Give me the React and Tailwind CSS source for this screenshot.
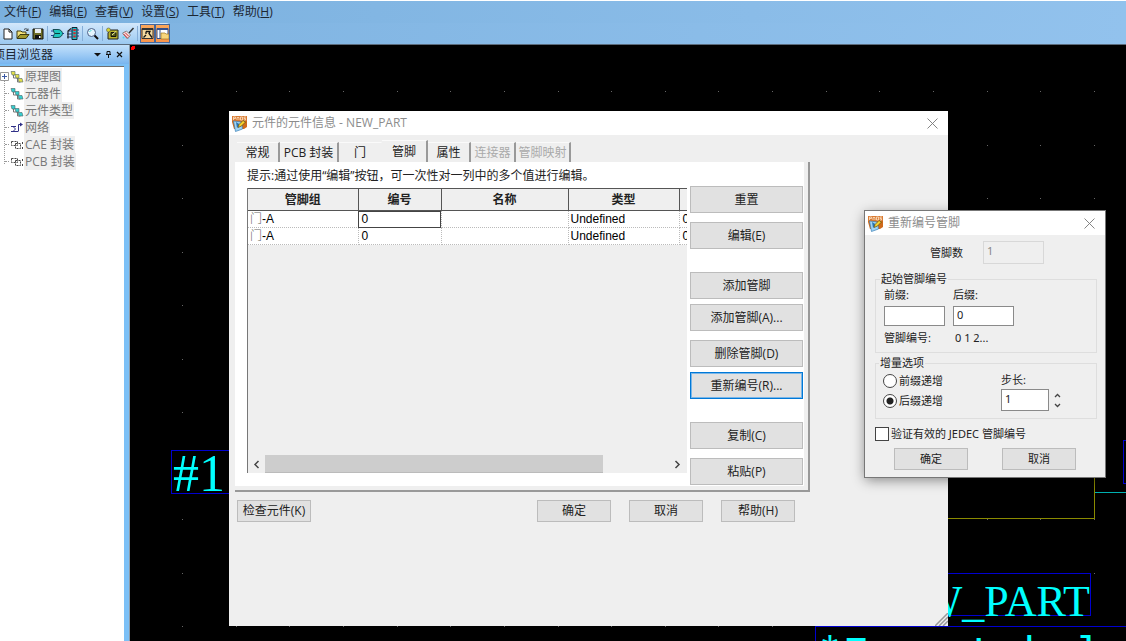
import React, { useState } from 'react';
import clsx from 'clsx';

const menus = [
  ['文件', 'F'],
  ['编辑', 'E'],
  ['查看', 'V'],
  ['设置', 'S'],
  ['工具', 'T'],
  ['帮助', 'H'],
];

const treeItems = [
  { label: '原理图', icon: 'sheet', color: '#e4e04a' },
  { label: '元器件', icon: 'sheet', color: '#35cfd0' },
  { label: '元件类型', icon: 'sheet', color: '#35cfd0' },
  { label: '网络', icon: 'net' },
  { label: 'CAE 封装', icon: 'decal' },
  { label: 'PCB 封装', icon: 'decal' },
];

const tabs = [
  { label: '常规', width: 'w-[43px]' },
  { label: 'PCB 封装', width: 'w-[59px]' },
  { label: '门', width: 'w-[43px]' },
  { label: '管脚', width: 'w-[46px]' },
  { label: '属性', width: 'w-[43px]' },
  { label: '连接器', width: 'w-[45px]', disabled: true },
  { label: '管脚映射', width: 'w-[55px]', disabled: true },
];

const pins = [
  { group: '门', suffix: '-A', number: '0', name: '', type: 'Undefined', swap: '0' },
  { group: '门', suffix: '-A', number: '0', name: '', type: 'Undefined', swap: '0' },
];

const sideButtons = [
  ['重置', '编辑(E)'],
  ['添加管脚', '添加管脚(A)...'],
  ['删除管脚(D)', '重新编号(R)...'],
  ['复制(C)', '粘贴(P)'],
];

function ToolIcon({ children }) {
  return (
    <svg className="h-[15px] w-[15px] shrink-0" viewBox="0 0 15 15" aria-hidden="true">
      {children}
    </svg>
  );
}

function ToolButton({ label, active, children }) {
  return (
    <button
      type="button"
      aria-label={label}
      className={clsx(
        'flex w-[15px] shrink-0 items-center justify-center overflow-hidden',
        active ? 'h-[19px] border border-[#46679b] bg-gradient-to-b from-[#fca75a] to-[#f9944a]' : 'h-[18px]'
      )}
    >
      <ToolIcon>{children}</ToolIcon>
    </button>
  );
}

function ToolSeparator() {
  return <span className="mx-[2px] h-[15px] w-px shrink-0 bg-[#86aed8]" />;
}

function Toolbar() {
  return (
    <div className="flex h-[21px] items-center bg-gradient-to-r from-[#7db2e0] to-[#92c2ed]">
      <div className="flex h-full items-center rounded-r bg-gradient-to-b from-[#d3e8fb] to-[#9bc9f1]">
        <ToolButton label="新建">
          <path d="M4 3h5l3 3v7H4z" fill="#fff" stroke="#222" />
          <path d="M9 3v3h3" fill="none" stroke="#222" />
        </ToolButton>
        <ToolButton label="打开">
          <path d="M2 12V5h4l1 1h4v2" fill="#f4e27a" stroke="#3d3b12" />
          <path d="M2 12.500l3-4h9l-3 4z" fill="#a29a2c" stroke="#3d3b12" />
          <path d="M9 3.500c2-1.500 3-.5 4 1m0-2v2h-2" fill="none" stroke="#222" strokeWidth=".8" />
        </ToolButton>
        <ToolButton label="保存">
          <path d="M3 3h10v10H3z" fill="#6d6d26" stroke="#111" />
          <path d="M5 3h6v4H5z" fill="#e9edf0" />
          <path d="M5 9h6v4H5z" fill="#111" />
          <path d="M9 10h1.500v2H9z" fill="#fff" />
        </ToolButton>
        <ToolSeparator />
        <ToolButton label="逻辑门">
          <path d="M1 5h3M1 9.500h3M11 7.500h3" stroke="#1a3d9a" />
          <path d="M3 3.500h5c3 0 4.500 2.500 4.500 4S11 11.500 8 11.500H3l1.500-4z" fill="#1fc7be" stroke="#174e55" />
          <path d="M5 7.500h5" stroke="#083d3e" />
        </ToolButton>
        <ToolButton label="器件">
          <path d="M7 1.500h5v12H7z" fill="#19bfc8" stroke="#123" />
          <path d="M9.500 3v9" stroke="#d4252b" strokeWidth="2.500" strokeDasharray="2 1.200" />
          <path d="M3 5h4M2 8h5M2 11h5M12 4h2M12 7h2M12 10h2" stroke="#263b78" />
          <path d="M6 2.500L3 5v7.500" fill="none" stroke="#222" strokeWidth="1.200" />
        </ToolButton>
        <ToolSeparator />
        <ToolButton label="缩放">
          <circle cx="6.500" cy="6.500" r="4" fill="#e5f6ff" stroke="#4b5f86" />
          <path d="M4.500 6a2 2 0 0 1 2-1.500" fill="none" stroke="#5dd" />
          <path d="M9.500 9.500L13 13" stroke="#111" strokeWidth="2" />
        </ToolButton>
        <ToolSeparator />
        <ToolButton label="设计">
          <path d="M5 4h8v9H3V7z" fill="#b9b32b" stroke="#222" />
          <path d="M6 6.500h5v4H6z" fill="#555b17" stroke="#111" />
          <path d="M7 9l4-3.500" stroke="#f5f5a0" />
          <circle cx="3.500" cy="4" r="2" fill="#d8d62a" stroke="#555" strokeWidth=".6" />
        </ToolButton>
        <ToolButton label="画笔">
          <path d="M13.500 2L9 7" stroke="#333" strokeWidth="1.500" />
          <path d="M2.500 7l4-2L10.500 9l-3 4z" fill="#f3e4e4" stroke="#666" strokeWidth=".7" />
          <path d="M3.500 8l4 4M5 6.500l4 4" stroke="#d7262a" />
          <circle cx="3.500" cy="11.500" r="1" fill="#51d5ea" />
        </ToolButton>
        <ToolSeparator />
        <ToolButton label="项目浏览器" active>
          <path d="M2 2.500h11v10H2z" fill="#f5d99f" stroke="#333" />
          <path d="M2 3.500h11" stroke="#333" />
          <path d="M3.500 11.500L6 9M6 5.500h4l-1 2 3 4M6 5.500v2.500" fill="none" stroke="#111" strokeWidth="1.300" />
        </ToolButton>
        <ToolButton label="输出窗口" active>
          <path d="M2 2.500h11v10H2z" fill="#fff" stroke="#35508c" />
          <path d="M2 3.500h11M5 4v8" stroke="#35508c" />
          <path d="M6 7h4l1 1h3v5H6z" fill="#f8d57b" stroke="#9e7925" strokeWidth=".7" />
        </ToolButton>
      </div>
    </div>
  );
}

function TreeIcon({ icon, color }) {
  if (icon === 'net') {
    return (
      <svg className="h-[14px] w-[14px]" viewBox="0 0 14 14" aria-hidden="true">
        <path d="M1 5.500h5M8.500 10V3.500H12M1 10.500h7.500M3 5.500l2.500 2.500L3 10.500" fill="none" stroke="#303087" />
        <path d="M10 1.500l3 2-3 2z" fill="#303087" />
      </svg>
    );
  }
  if (icon === 'decal') {
    return (
      <svg className="h-[14px] w-[14px]" viewBox="0 0 14 14" aria-hidden="true">
        <path d="M1.500 3.500h6v4h-6zM5.500 5.500h5v5h-5z" fill="none" stroke="#444" strokeDasharray="2 1" />
        <path d="M12.500 4v2M12.500 9v2" stroke="#444" />
      </svg>
    );
  }
  return (
    <svg className="h-[14px] w-[14px]" viewBox="0 0 14 14" aria-hidden="true">
      <path d="M3.500 5v3h4M7.500 8v4h3" fill="none" stroke="#777" />
      <path d="M1 1.500h4v3.500H2z" fill={color} stroke="#4d6466" strokeWidth=".6" />
      <path d="M5 4.500h4V8H6z" fill={color} stroke="#4d6466" strokeWidth=".6" />
      <path d="M8 8.500h4l1 3.500H9z" fill={color} stroke="#4d6466" strokeWidth=".6" />
    </svg>
  );
}

function ProjectExplorer() {
  return (
    <aside className="flex w-[130px] shrink-0 flex-col border-r border-[#8a9aa8] bg-[#7cc0f6]">
      <div className="flex h-[19px] shrink-0 items-center justify-between overflow-hidden bg-gradient-to-b from-[#c3e1fb] to-[#79b5ee] pr-[6px]">
        <h2 className="-ml-[7px] whitespace-nowrap text-[12px] text-[#1d2733]">项目浏览器</h2>
        <div className="flex items-center gap-[4px]">
          <button type="button" aria-label="菜单">
            <svg className="h-[7px] w-[7px]" viewBox="0 0 7 7"><path d="M0 2h7L3.500 5.500z" fill="#111" /></svg>
          </button>
          <button type="button" aria-label="固定">
            <svg className="h-[7px] w-[7px]" viewBox="0 0 7 7">
              <path d="M2 .500h3v3H2zM1 3.500h5M3.500 4v3" fill="none" stroke="#111" />
            </svg>
          </button>
          <button type="button" aria-label="关闭">
            <svg className="h-[7px] w-[7px]" viewBox="0 0 7 7"><path d="M1 1l5 5M6 1L1 6" stroke="#111" strokeWidth="1.200" /></svg>
          </button>
        </div>
      </div>
      <ul className="relative mr-[5px] mt-[2px] flex-1 border-t border-[#6f6f6f] bg-white pt-px">
        <li className="absolute left-[4px] top-[12px] h-[85px] border-l border-dotted border-[#999]" aria-hidden="true" />
        {treeItems.map((item, i) => (
          <li key={item.label} className="flex h-[17px] items-center">
            {i === 0 ? (
              <svg className="relative h-[9px] w-[9px]" viewBox="0 0 9 9" aria-hidden="true">
                <path d="M.500.500h8v8h-8z" fill="#fff" stroke="#999" />
                <path d="M2 4.500h5M4.500 2v5" stroke="#3b5aa5" />
              </svg>
            ) : (
              <span className="ml-[5px] w-[4px] border-t border-dotted border-[#999]" />
            )}
            <span className="flex w-[15px] justify-center">
              <TreeIcon icon={item.icon} color={item.color} />
            </span>
            <span className="whitespace-nowrap bg-[#efefef] px-px text-[12px] leading-[17px] text-[#777]">{item.label}</span>
          </li>
        ))}
      </ul>
    </aside>
  );
}

// schematic sheet behind the windows
function Schematic() {
  const cols = Array.from({ length: 18 }, (_, i) => 52 + Math.round((i * 912) / 17));
  const rows = Array.from({ length: 11 }, (_, i) => 46 + Math.round((i * 535) / 10));
  return (
    <svg
      className="absolute left-0 top-0 h-[596px] w-[996px]"
      viewBox="0 0 996 596"
      shapeRendering="crispEdges"
      aria-label="原理图"
    >
      {rows.map((y) => cols.map((x) => <rect key={`${x}-${y}`} x={x} y={y} width="1" height="1" fill="#666" />))}
      <circle cx="3" cy="3" r="2" fill="#f00" />
      <path d="M41.500 405.500H130v43H41.500zM780 528.500h180.500v42H780zM685.500 600v-18.500H1000M1000 395.500h-6.500v43h6.500" fill="none" stroke="#0000d0" />
      <path d="M780 473.500h184.500V380" fill="none" stroke="#8a8a00" />
      <path d="M965 447.500h31" stroke="#00b0b0" />
      <g fill="#00ffff" fontFamily="'Liberation Serif', serif">
        <text x="43" y="446" fontSize="52">#1</text>
        <text x="960" y="571" fontSize="44" textAnchor="end">NEW_PART</text>
        <text x="687" y="621" fontSize="43" fontFamily="'Liberation Mono', monospace">*Free Label</text>
      </g>
    </svg>
  );
}

function AppLogo() {
  return (
    <svg className="h-[17px] w-[17px] shrink-0" viewBox="0 0 17 17" aria-hidden="true">
      <path d="M1 1h15v11l-3 2H3L1 7z" fill="#cf6a1b" />
      <path d="M1 1h15v5H1z" fill="#d97a33" />
      <path d="M2.500 5V2h2v1.500h-2M6 5V2.500h2V5M9.500 2v3h2V2zM15 2h-2v1.500h1.500V5h-2" fill="none" stroke="#fbe3c5" strokeWidth=".8" />
      <path d="M2.500 6l8 1 1 7-7 2.500z" fill="#9fd4f5" stroke="#3b7fb5" strokeWidth=".7" />
      <path d="M5 7l4 2.500L6 13z" fill="#2b74ad" />
      <path d="M7 12.500l1-3 4-4 2.500 1.500-4 4z" fill="#f7d22e" stroke="#5c4b13" strokeWidth=".7" />
    </svg>
  );
}

function TitleBar({ title }) {
  return (
    <div className="flex h-[24px] shrink-0 items-center gap-[4px] bg-white pl-[2px] pr-[10px]">
      <AppLogo />
      <h1 className="flex-1 text-[12px] text-[#8c8c8c]">{title}</h1>
      <button type="button" aria-label="关闭">
        <svg className="h-[11px] w-[11px]" viewBox="0 0 11 11"><path d="M.500.500l10 10M10.500.500l-10 10" stroke="#777" strokeWidth=".9" /></svg>
      </button>
    </div>
  );
}

function PushButton({ children, className, focused }) {
  return (
    <button
      type="button"
      className={clsx(
        'flex items-center justify-center whitespace-nowrap border bg-[#e1e1e1]',
        focused ? 'border-[#0078d7] outline outline-1 -outline-offset-2 outline-[#79b6e8]' : 'border-[#bcbcbc]',
        className
      )}
    >
      {children}
    </button>
  );
}

function PinTable() {
  return (
    <div className="flex min-w-0 flex-1 flex-col self-start border-l border-[#777] bg-[#efefef]">
      <div className="h-[267px] overflow-hidden">
        <table className="w-[541px] table-fixed border-collapse">
          <colgroup>
            <col className="w-[110px]" />
            <col className="w-[83px]" />
            <col className="w-[127px]" />
            <col className="w-[111px]" />
            <col className="w-[110px]" />
          </colgroup>
          <thead>
            <tr className="h-[22px] text-[12px] leading-[14px] text-[#222]">
              {['管脚组', '编号', '名称', '类型', ''].map((head) => (
                <th key={head} className="border-y border-r border-[#555] p-0 font-bold">{head}</th>
              ))}
            </tr>
          </thead>
          <tbody>
            {pins.map((pin, i) => (
              <tr key={i} className="h-[17px] bg-white font-['Liberation_Sans','Noto_Sans_CJK_SC',sans-serif] text-[12px] leading-[14px] text-black">
                <td className="border-b border-r border-dotted border-[#bbb] px-[2px] py-0">
                  <span className="font-light text-[#666]">{pin.group}</span>{pin.suffix}
                </td>
                <td
                  className={clsx(
                    'border-b border-r border-dotted border-[#bbb] px-[3px] py-0',
                    i === 0 && 'outline outline-1 -outline-offset-1 outline-[#444]'
                  )}
                >
                  {pin.number}
                </td>
                <td className="border-b border-r border-dotted border-[#bbb] p-0">{pin.name}</td>
                <td className="border-b border-r border-dotted border-[#bbb] px-[2px] py-0">{pin.type}</td>
                <td className="border-b border-dotted border-[#bbb] px-[3px] py-0">{pin.swap}</td>
              </tr>
            ))}
          </tbody>
        </table>
      </div>
      <div className="flex h-[18px] items-center">
        <button type="button" aria-label="向左滚动" className="flex w-[17px] justify-center">
          <svg className="h-[9px] w-[7px]" viewBox="0 0 7 9"><path d="M5.500 1L2 4.500 5.500 8" fill="none" stroke="#444" strokeWidth="1.500" /></svg>
        </button>
        <div className="flex h-full flex-1">
          <div className="h-full w-[84%] border-b border-[#bbb] bg-[#cdcdcd]" />
        </div>
        <button type="button" aria-label="向右滚动" className="flex w-[20px] justify-center">
          <svg className="h-[9px] w-[7px]" viewBox="0 0 7 9"><path d="M1.500 1L5 4.500 1.500 8" fill="none" stroke="#444" strokeWidth="1.500" /></svg>
        </button>
      </div>
    </div>
  );
}

function PartInfoDialog() {
  const [activeTab, setActiveTab] = useState('管脚');
  return (
    <section
      className="absolute left-[99px] top-[66px] flex h-[515px] w-[719px] flex-col bg-[#efefef] text-[12px] text-[#222]"
      aria-label="元件的元件信息"
    >
      <TitleBar title="元件的元件信息 - NEW_PART" />
      <div className="mt-[5px] flex items-end pl-[8px]" role="tablist">
        {tabs.map((tab) => (
          <button
            key={tab.label}
            type="button"
            role="tab"
            aria-selected={activeTab === tab.label}
            disabled={tab.disabled}
            onClick={() => setActiveTab(tab.label)}
            className={clsx(
              'flex items-center justify-center whitespace-nowrap border-t border-t-[#fafafa]',
              tab.width,
              activeTab === tab.label ? 'h-[22px]' : 'h-[20px]',
              tab.label === '门' ? 'border-r border-r-[#efefef]' : 'border-r-2 border-r-[#999]',
              tab.disabled && 'text-[#aaa]'
            )}
          >
            {tab.label}
          </button>
        ))}
      </div>
      <div className="ml-[6px] mr-[138px] border-b-2 border-r-2 border-[#999]">
        <div className="mb-[4px] mr-[4px] bg-white pb-px pl-[12px] pr-px">
          <p className="h-[24px] pt-[4px] leading-[20px]">提示:通过使用“编辑”按钮，可一次性对一列中的多个值进行编辑。</p>
          <div className="flex gap-[3px]">
            <div className="flex min-w-0 flex-1 pt-[2px]">
              <PinTable />
            </div>
            <div className="flex w-[113px] flex-col gap-[23px]">
              {sideButtons.map((group, g) => (
                <div key={group[0]} className={clsx('flex flex-col', g === 0 || g === 3 ? 'gap-[9px]' : 'gap-[5px]', g === 2 && '-mt-[14px]')}>
                  {group.map((label) => (
                    <PushButton key={label} className="h-[27px] w-full" focused={label === '重新编号(R)...'}>
                      {label}
                    </PushButton>
                  ))}
                </div>
              ))}
            </div>
          </div>
        </div>
      </div>
      <div className="ml-[8px] mr-[153px] mt-[8px] flex gap-[18px]">
        <PushButton className="mr-auto h-[22px] w-[74px]">检查元件(K)</PushButton>
        <PushButton className="h-[22px] w-[74px]">确定</PushButton>
        <PushButton className="h-[22px] w-[74px]">取消</PushButton>
        <PushButton className="h-[22px] w-[74px]">帮助(H)</PushButton>
      </div>
      <svg className="ml-auto mt-auto h-[13px] w-[13px]" viewBox="0 0 13 13" aria-hidden="true">
        <path d="M0 13L13 0M4 13l9-9M8 13l5-5" stroke="#999" strokeWidth="1.500" />
      </svg>
    </section>
  );
}

function RenumberDialog() {
  const [mode, setMode] = useState('suffix');
  return (
    <section
      className="absolute left-[735px] top-[166px] flex w-[240px] flex-col bg-[#efefef] font-['Noto_Sans','Noto_Sans_CJK_SC',sans-serif] text-[11px] leading-[14px] text-[#222] shadow-[0_3px_12px_rgba(0,0,0,0.45)] outline outline-1 outline-[#777]"
      aria-label="重新编号管脚"
    >
      <TitleBar title="重新编号管脚" />
      <div className="flex flex-col pb-[7px] pl-[10px] pr-[8px] pt-[6px]">
        <div className="flex items-center gap-[20px] pl-[55px]">
          <label htmlFor="pin-count">管脚数</label>
          <input id="pin-count" disabled defaultValue="1" className="h-[23px] w-[61px] border border-[#d8d8d8] bg-[#efefef] px-[3px] pb-[4px] text-[#888]" />
        </div>

        <fieldset className="mt-[8px] h-[81px] border border-[#dedede] px-[8px]">
          <legend className="-ml-[4px] px-px">起始管脚编号</legend>
          <div className="flex gap-[8px] pt-[2px]">
            <div className="flex w-[61px] flex-col gap-[4px]">
              <label htmlFor="prefix">前缀:</label>
              <input id="prefix" className="h-[20px] border border-[#8a8a8a] bg-white px-[3px] pb-[3px]" />
            </div>
            <div className="flex w-[61px] flex-col gap-[4px]">
              <label htmlFor="suffix">后缀:</label>
              <input id="suffix" defaultValue="0" className="h-[20px] border border-[#8a8a8a] bg-white px-[3px] pb-[3px]" />
            </div>
          </div>
          <p className="mt-[5px] flex gap-[9px]">
            <span className="w-[62px]">管脚编号:</span>
            <span>0 1 2...</span>
          </p>
        </fieldset>

        <fieldset className="mt-[3px] h-[63px] border border-[#dedede] px-[7px]">
          <legend className="-ml-[4px] px-px">增量选项</legend>
          <div className="flex">
            <div className="flex w-[118px] flex-col gap-[6px] pt-[4px]">
              {[['prefix', '前缀递增'], ['suffix', '后缀递增']].map(([value, label]) => (
                <label key={value} className="flex items-center gap-[2px]">
                  <input
                    type="radio"
                    name="step-mode"
                    checked={mode === value}
                    onChange={() => setMode(value)}
                    className="h-[14px] w-[14px] appearance-none rounded-full border border-[#444] bg-white bg-center checked:bg-[radial-gradient(circle,#222_3px,#fff_4px)]"
                  />
                  {label}
                </label>
              ))}
            </div>
            <div className="flex flex-col gap-[2px]">
              <label htmlFor="step" className="pt-[3px]">步长:</label>
              <div className="flex items-center gap-[5px]">
                <input id="step" defaultValue="1" className="h-[22px] w-[48px] border border-[#8a8a8a] bg-white px-[3px] pb-[3px]" />
                <div className="flex flex-col gap-[5px]">
                  <button type="button" aria-label="增加">
                    <svg className="h-[5px] w-[7px]" viewBox="0 0 7 5"><path d="M1 4l2.500-2.500L6 4" fill="none" stroke="#444" strokeWidth="1.300" /></svg>
                  </button>
                  <button type="button" aria-label="减少">
                    <svg className="h-[5px] w-[7px]" viewBox="0 0 7 5"><path d="M1 1l2.500 2.500L6 1" fill="none" stroke="#444" strokeWidth="1.300" /></svg>
                  </button>
                </div>
              </div>
            </div>
          </div>
        </fieldset>

        <label className="mt-[8px] flex items-center gap-[2px]">
          <input type="checkbox" className="h-[14px] w-[14px] appearance-none border border-[#444] bg-white" />
          验证有效的 JEDEC 管脚编号
        </label>
        <div className="mt-[7px] flex gap-[34px] pl-[19px]">
          <PushButton className="h-[22px] w-[74px]">确定</PushButton>
          <PushButton className="h-[22px] w-[74px]">取消</PushButton>
        </div>
      </div>
    </section>
  );
}

export default function App() {
  return (
    <div className="flex h-screen flex-col overflow-hidden bg-black font-['Open_Sans','Noto_Sans_CJK_SC',sans-serif]">
      <nav className="flex h-[23px] shrink-0 items-center gap-[8px] border-t border-white bg-gradient-to-r from-[#7ab0de] to-[#92c2ed] pl-[4px]">
        {menus.map(([label, key]) => (
          <button key={key} type="button" className="whitespace-nowrap text-[12px] text-[#1d2733]">
            {label}(<span className="underline">{key}</span>)
          </button>
        ))}
      </nav>
      <Toolbar />
      <div className="h-px shrink-0 bg-[#5b6b7c]" />
      <div className="flex min-h-0 flex-1">
        <ProjectExplorer />
        <main className="relative min-w-0 flex-1 overflow-hidden bg-black">
          <Schematic />
          <PartInfoDialog />
          <RenumberDialog />
        </main>
      </div>
    </div>
  );
}
